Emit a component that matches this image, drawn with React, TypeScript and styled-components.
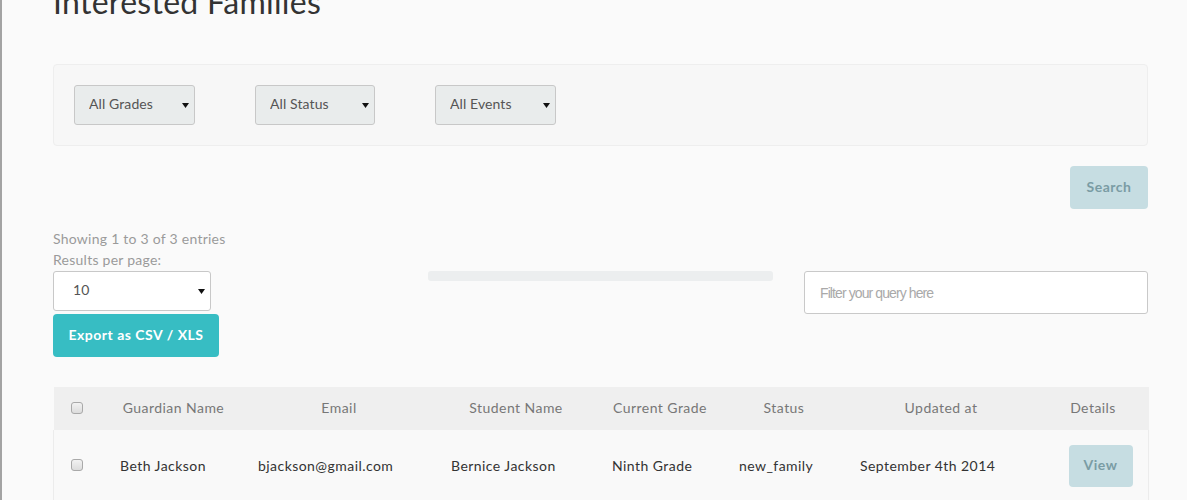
import React from "react";
import styled, { createGlobalStyle } from "styled-components";

const GlobalStyle = createGlobalStyle`
  html, body {
    margin: 0;
    padding: 0;
    background: #fafafa;
    font-family: Lato, "Open Sans", "Liberation Sans", sans-serif;
    color: #333;
    overflow: hidden;
  }
  * { box-sizing: border-box; }
`;

const Frame = styled.div`
  min-height: 500px;
  border-left: 2px solid #a3a3a3;
  padding: 0 37px 0 51px;
`;

const Container = styled.div`
  width: 1095px;
`;

const Title = styled.h1`
  margin: -18px 0 0;
  font-size: 32px;
  line-height: 40px;
  font-weight: 400;
  color: #333;
  letter-spacing: 0.3px;
`;

const FilterPanel = styled.div`
  margin-top: 42px;
  border: 1px solid #eeeeee;
  border-radius: 4px;
  background: #f7f7f7;
  padding: 20px;
  display: flex;
  gap: 60px;
`;

const SelectWrap = styled.div<{ $w: number }>`
  position: relative;
  width: ${(p) => p.$w}px;
`;

const Select = styled.select<{ $light?: boolean }>`
  appearance: none;
  -webkit-appearance: none;
  width: 100%;
  height: 40px;
  border: 1px solid #c8c8c8;
  border-radius: 3px;
  background: ${(p) => (p.$light ? "#ffffff" : "#e9ecec")};
  color: #555;
  font-family: Lato, "Open Sans", "Liberation Sans", sans-serif;
  font-size: 14px;
  letter-spacing: 0.1px;
  padding: 0 20px 3px ${(p) => (p.$light ? 19 : 14)}px;
  outline: none;
`;

const Arrow = styled.svg`
  position: absolute;
  right: 6px;
  top: 50%;
  margin-top: -2px;
  width: 7px;
  height: 5px;
  pointer-events: none;
`;

const SearchRow = styled.div`
  display: flex;
  justify-content: flex-end;
  margin-top: 20px;
`;

const Button = styled.button<{ $variant: "muted" | "primary" }>`
  border: none;
  border-radius: 4px;
  height: 43px;
  padding: 0 16px 3px;
  font-family: Lato, "Open Sans", "Liberation Sans", sans-serif;
  font-weight: 700;
  font-size: 14px;
  letter-spacing: 0.5px;
  cursor: pointer;
  background: ${(p) => (p.$variant === "primary" ? "#37bdc3" : "#c6dde2")};
  color: ${(p) => (p.$variant === "primary" ? "#ffffff" : "#7a9ca4")};
`;

const Info = styled.div`
  margin-top: 19px;
  color: #9a9a9a;
  font-size: 14px;
  line-height: 21px;
  letter-spacing: 0.25px;
`;

const Controls = styled.div`
  display: grid;
  grid-template-columns: 1fr 345px 344px;
  column-gap: 31px;
  margin-top: 1px;
`;

const LeftCol = styled.div`
  display: flex;
  flex-direction: column;
  align-items: flex-start;
  gap: 3px;
`;

const ExportButton = styled(Button)`
  width: 166px;
  padding: 0 0 3px;
`;

const SearchButton = styled(Button)`
  width: 78px;
  padding: 0 0 3px;
`;

const Progress = styled.div`
  height: 10px;
  border-radius: 3px;
  background: #eceeef;
`;

const FilterInput = styled.input`
  height: 43px;
  width: 100%;
  border: 1px solid #c9c9c9;
  border-radius: 3px;
  background: #fff;
  padding: 0 15px;
  font-family: "Liberation Sans", Arial, sans-serif;
  font-size: 14px;
  letter-spacing: -0.9px;
  outline: none;
  &::placeholder {
    color: #a9a9a9;
  }
`;

const Table = styled.table`
  margin-top: 30px;
  width: 1095px;
  table-layout: fixed;
  border-collapse: collapse;
  font-size: 14px;
  letter-spacing: 0.45px;
`;

const HeadRow = styled.tr`
  background: #efefef;
  height: 43px;
`;

const Th = styled.th`
  font-weight: 400;
  color: #777;
  text-align: center;
  padding: 0 15px 2px;
  white-space: nowrap;
`;

const BodyRow = styled.tr`
  background: #f9f9f9;
  height: 72px;
`;

const Td = styled.td<{ $last?: boolean }>`
  color: #333;
  padding: 0 15.5px 2px;
  white-space: nowrap;
  text-align: left;
  border-right: ${(p) => (p.$last ? "1px solid #ececec" : "none")};
`;

const CheckCell = styled.td<{ $head?: boolean }>`
  padding: 0 0 2px 17px;
  vertical-align: middle;
  border-left: ${(p) => (p.$head ? "none" : "1px solid #ececec")};
`;

const Check = styled.input`
  appearance: none;
  -webkit-appearance: none;
  display: block;
  width: 12px;
  height: 12px;
  margin: 0;
  border: 1px solid #a9a9a9;
  border-radius: 3px;
  background: linear-gradient(#f2f2f2, #dcdcdc);
`;

const ViewButton = styled(Button)`
  height: 42px;
  width: 64px;
  padding: 0 0 3px;
  margin-left: 31px;
`;

const ArrowIcon = () => (
  <Arrow viewBox="0 0 7 5">
    <polygon points="0,0 7,0 3.5,5" fill="#111" />
  </Arrow>
);

const filters = [
  { label: "All Grades", w: 121 },
  { label: "All Status", w: 120 },
  { label: "All Events", w: 121 },
];

const columns = [
  { w: 51, label: "" },
  { w: 138, label: "Guardian Name" },
  { w: 193, label: "Email" },
  { w: 161, label: "Student Name" },
  { w: 127, label: "Current Grade" },
  { w: 121, label: "Status" },
  { w: 193, label: "Updated at" },
  { w: 111, label: "Details" },
];

const rows = [
  {
    guardian: "Beth Jackson",
    email: "bjackson@gmail.com",
    student: "Bernice Jackson",
    grade: "Ninth Grade",
    status: "new_family",
    updated: "September 4th 2014",
  },
];

export default function App() {
  return (
    <>
      <GlobalStyle />
      <Frame>
        <Container>
          <Title>Interested Families</Title>
          <FilterPanel>
            {filters.map((f) => (
              <SelectWrap key={f.label} $w={f.w}>
                <Select defaultValue={f.label}>
                  <option>{f.label}</option>
                </Select>
                <ArrowIcon />
              </SelectWrap>
            ))}
          </FilterPanel>
          <SearchRow>
            <SearchButton $variant="muted">Search</SearchButton>
          </SearchRow>
          <Info>
            <div>Showing 1 to 3 of 3 entries</div>
            <div>Results per page:</div>
          </Info>
          <Controls>
            <LeftCol>
              <SelectWrap $w={158}>
                <Select $light defaultValue="10">
                  <option>10</option>
                </Select>
                <ArrowIcon />
              </SelectWrap>
              <ExportButton $variant="primary">Export as CSV / XLS</ExportButton>
            </LeftCol>
            <Progress />
            <FilterInput placeholder="Filter your query here" />
          </Controls>
          <Table>
            <colgroup>
              {columns.map((c, i) => (
                <col key={i} style={{ width: c.w }} />
              ))}
            </colgroup>
            <thead>
              <HeadRow>
                <CheckCell $head>
                  <Check type="checkbox" />
                </CheckCell>
                {columns.slice(1).map((c) => (
                  <Th key={c.label}>{c.label}</Th>
                ))}
              </HeadRow>
            </thead>
            <tbody>
              {rows.map((r) => (
                <BodyRow key={r.email}>
                  <CheckCell>
                    <Check type="checkbox" />
                  </CheckCell>
                  <Td>{r.guardian}</Td>
                  <Td>{r.email}</Td>
                  <Td>{r.student}</Td>
                  <Td>{r.grade}</Td>
                  <Td>{r.status}</Td>
                  <Td>{r.updated}</Td>
                  <Td $last style={{ padding: 0 }}>
                    <ViewButton $variant="muted">View</ViewButton>
                  </Td>
                </BodyRow>
              ))}
            </tbody>
          </Table>
        </Container>
      </Frame>
    </>
  );
}
